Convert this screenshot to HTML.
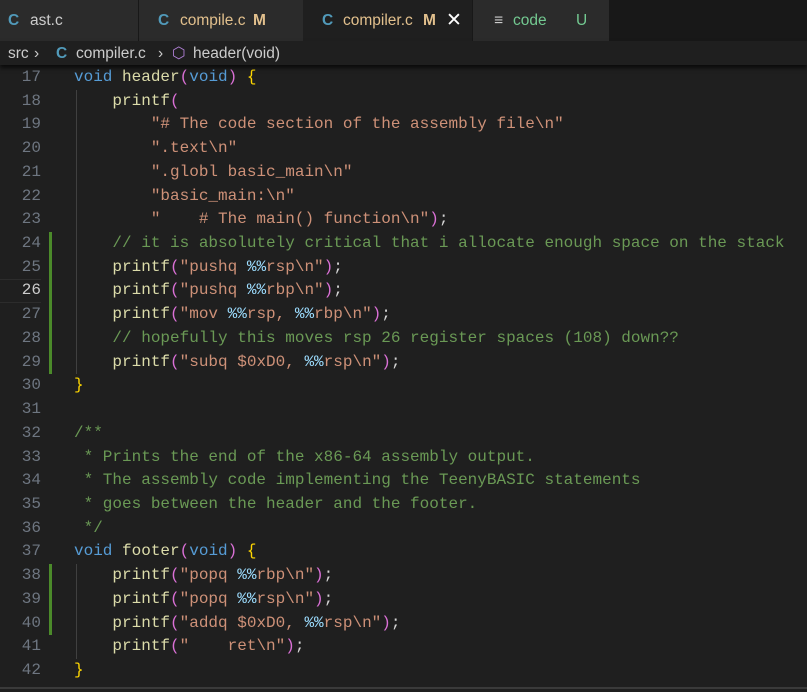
<!DOCTYPE html><html><head><style>
body{margin:0;width:807px;height:692px;background:#1f1f1f;overflow:hidden;font-family:"Liberation Sans",sans-serif;position:relative}
.tabs{position:absolute;top:0;left:0;width:807px;height:41px;background:#181818;font-size:15.5px;line-height:41px;color:#ccc}
.tab{position:absolute;top:0;height:41px;background:#2b2b2b}
.tabs span{position:absolute;top:0;white-space:nowrap;z-index:3}
.c{color:#519aba;font-weight:bold}
.bc{position:absolute;top:41px;left:0;width:807px;height:24px;background:#1f1f1f;font-size:15.5px;line-height:26px;color:#ccc;box-shadow:0 3px 4px #000a;z-index:2;white-space:nowrap}
.bc span{position:absolute;top:0}
.code{position:absolute;top:66px;left:0;font-family:"Liberation Mono",monospace;font-size:16px}
.l{height:23.72px;line-height:23.72px;white-space:pre;position:relative}
.n{display:inline-block;width:41px;text-align:right;color:#6e7681}
.t{position:absolute;left:74px;top:0;color:#d4d4d4}
.k{color:#569cd6}.f{color:#dcdcaa}.s{color:#ce9178}.p{color:#da70d6}.y{color:#ffd700}.cm{color:#6a9955}.e{color:#9cdcfe}
.g{position:absolute;left:49px;top:0;width:3px;height:23.72px;background:#4b8a2a}
.ig{position:absolute;left:76px;top:0;width:1px;height:23.72px;background:#404040}
</style></head><body>
<div class="tabs">
<div class="tab" style="left:0;width:138px"></div>
<div class="tab" style="left:139px;width:164px"></div>
<div class="tab" style="left:303px;width:169px;background:#1f1f1f"></div>
<div class="tab" style="left:473px;width:136px"></div>
<span class="c" style="left:8px">C</span><span style="left:30px">ast.c</span>
<span class="c" style="left:158px">C</span><span style="left:180px;color:#e2c08d">compile.c</span><span style="left:253px;color:#e2c08d;font-weight:bold">M</span>
<span class="c" style="left:322px">C</span><span style="left:343px;color:#e2c08d">compiler.c</span><span style="left:423px;color:#e2c08d;font-weight:bold">M</span><span style="left:446px;color:#fff;font-size:19px">✕</span>
<span style="left:494px;color:#ccc">≡</span><span style="left:513px;color:#73c991">code</span><span style="left:576px;color:#73c991">U</span>
</div>
<div class="bc"><span style="left:8px">src</span><span style="left:34px">›</span><span class="c" style="left:56px">C</span><span style="left:76px">compiler.c</span><span style="left:158px">›</span><span style="left:172px;color:#b180d7">⬡</span><span style="left:193px">header(void)</span></div>
<div class="code">
<div class="l"><span class="n">17</span><span class="t"><span class="k">void</span> <span class="f">header</span><span class="p">(</span><span class="k">void</span><span class="p">)</span> <span class="y">{</span></span></div>
<div class="l"><span class="n">18</span><i class="ig"></i><span class="t">    <span class="f">printf</span><span class="p">(</span></span></div>
<div class="l"><span class="n">19</span><i class="ig"></i><span class="t">        <span class="s">"# The code section of the assembly file\n"</span></span></div>
<div class="l"><span class="n">20</span><i class="ig"></i><span class="t">        <span class="s">".text\n"</span></span></div>
<div class="l"><span class="n">21</span><i class="ig"></i><span class="t">        <span class="s">".globl basic_main\n"</span></span></div>
<div class="l"><span class="n">22</span><i class="ig"></i><span class="t">        <span class="s">"basic_main:\n"</span></span></div>
<div class="l"><span class="n">23</span><i class="ig"></i><span class="t">        <span class="s">"    # The main() function\n"</span><span class="p">)</span>;</span></div>
<div class="l"><span class="n">24</span><i class="g"></i><i class="ig"></i><span class="t">    <span class="cm">// it is absolutely critical that i allocate enough space on the stack</span></span></div>
<div class="l"><span class="n">25</span><i class="g"></i><i class="ig"></i><span class="t">    <span class="f">printf</span><span class="p">(</span><span class="s">"pushq </span><span class="e">%%</span><span class="s">rsp\n"</span><span class="p">)</span>;</span></div>
<div class="l" style="box-shadow:inset 0 1px #2c2c2c,inset 0 -1px #2c2c2c"><span class="n" style="color:#ccc">26</span><i class="g"></i><i class="ig"></i><span class="t">    <span class="f">printf</span><span class="p">(</span><span class="s">"pushq </span><span class="e">%%</span><span class="s">rbp\n"</span><span class="p">)</span>;</span></div>
<div class="l"><span class="n">27</span><i class="g"></i><i class="ig"></i><span class="t">    <span class="f">printf</span><span class="p">(</span><span class="s">"mov </span><span class="e">%%</span><span class="s">rsp, </span><span class="e">%%</span><span class="s">rbp\n"</span><span class="p">)</span>;</span></div>
<div class="l"><span class="n">28</span><i class="g"></i><i class="ig"></i><span class="t">    <span class="cm">// hopefully this moves rsp 26 register spaces (108) down??</span></span></div>
<div class="l"><span class="n">29</span><i class="g"></i><i class="ig"></i><span class="t">    <span class="f">printf</span><span class="p">(</span><span class="s">"subq $0xD0, </span><span class="e">%%</span><span class="s">rsp\n"</span><span class="p">)</span>;</span></div>
<div class="l"><span class="n">30</span><span class="t"><span class="y">}</span></span></div>
<div class="l"><span class="n">31</span></div>
<div class="l"><span class="n">32</span><span class="t"><span class="cm">/**</span></span></div>
<div class="l"><span class="n">33</span><span class="t"><span class="cm"> * Prints the end of the x86-64 assembly output.</span></span></div>
<div class="l"><span class="n">34</span><span class="t"><span class="cm"> * The assembly code implementing the TeenyBASIC statements</span></span></div>
<div class="l"><span class="n">35</span><span class="t"><span class="cm"> * goes between the header and the footer.</span></span></div>
<div class="l"><span class="n">36</span><span class="t"><span class="cm"> */</span></span></div>
<div class="l"><span class="n">37</span><span class="t"><span class="k">void</span> <span class="f">footer</span><span class="p">(</span><span class="k">void</span><span class="p">)</span> <span class="y">{</span></span></div>
<div class="l"><span class="n">38</span><i class="g"></i><i class="ig"></i><span class="t">    <span class="f">printf</span><span class="p">(</span><span class="s">"popq </span><span class="e">%%</span><span class="s">rbp\n"</span><span class="p">)</span>;</span></div>
<div class="l"><span class="n">39</span><i class="g"></i><i class="ig"></i><span class="t">    <span class="f">printf</span><span class="p">(</span><span class="s">"popq </span><span class="e">%%</span><span class="s">rsp\n"</span><span class="p">)</span>;</span></div>
<div class="l"><span class="n">40</span><i class="g"></i><i class="ig"></i><span class="t">    <span class="f">printf</span><span class="p">(</span><span class="s">"addq $0xD0, </span><span class="e">%%</span><span class="s">rsp\n"</span><span class="p">)</span>;</span></div>
<div class="l"><span class="n">41</span><i class="ig"></i><span class="t">    <span class="f">printf</span><span class="p">(</span><span class="s">"    ret\n"</span><span class="p">)</span>;</span></div>
<div class="l"><span class="n">42</span><span class="t"><span class="y">}</span></span></div>
</div>
<div style="position:absolute;left:0;top:687px;width:807px;height:2px;background:#3a3a3a"></div>
</body></html>
